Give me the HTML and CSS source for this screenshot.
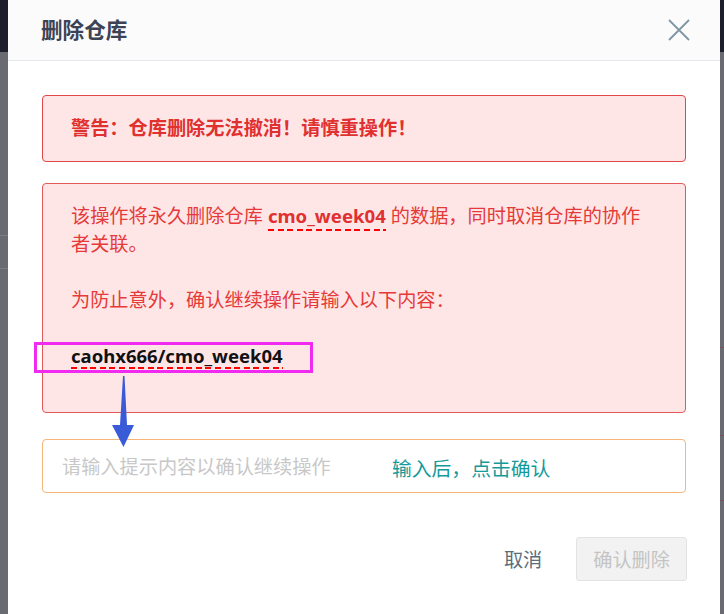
FILE: index.html
```html
<!DOCTYPE html>
<html lang="zh-CN">
<head>
<meta charset="utf-8">
<title>删除仓库</title>
<link rel="stylesheet" href="styles.css">
</head>
<body>
<div class="dialog">
  <header class="dlg-head">
    <h2 class="dlg-title">删除仓库</h2>
    <button class="dlg-close" aria-label="关闭">
      <svg width="22" height="22" viewBox="0 0 22 22"><path d="M1 1 L21 21 M21 1 L1 21" stroke="#7f95a2" stroke-width="1.8" fill="none"/></svg>
    </button>
  </header>
  <div class="dlg-body">
    <div class="alert alert-warn">警告：仓库删除无法撤消！请慎重操作！</div>
    <div class="alert alert-info">
      <p class="para">该操作将永久删除仓库 <b class="mark">cmo_week04</b> 的数据，同时取消仓库的协作者关联。</p>
      <p class="para">为防止意外，确认继续操作请输入以下内容：</p>
      <p class="para repo"><b class="mark mark-dark">caohx666/cmo_week04</b></p>
    </div>
    <div class="field">
      <input class="field-input" type="text" placeholder="请输入提示内容以确认继续操作">
      <span class="note">输入后，点击确认</span>
    </div>
  </div>
  <footer class="dlg-foot">
    <button class="btn-cancel">取消</button>
    <button class="btn-confirm" disabled>确认删除</button>
  </footer>
  <span class="hl-box"></span>
  <svg class="arrow" width="24" height="72" viewBox="0 0 24 72"><polygon points="11,0 12.5,0 15,49 22,49 11.5,71 0,49 8,49" fill="#3a5bd8"/></svg>
</div>
</body>
</html>
```
FILE: styles.css
```css
html, body {
  margin: 0;
  padding: 0;
}
body {
  width: 724px;
  height: 614px;
  overflow: hidden;
  font-family: "Noto Sans", "Noto Sans CJK SC", sans-serif;
  background:
    linear-gradient(#1c1f2b, #1c1f2b) 0 0 / 100% 52px no-repeat,
    linear-gradient(#7b7c84, #7b7c84) 0 235px / 8px 1px no-repeat,
    linear-gradient(#7b7c84, #7b7c84) 0 268px / 8px 1px no-repeat,
    linear-gradient(#7a5158, #7a5158) 720px 347px / 4px 1px no-repeat,
    linear-gradient(#7a5158, #7a5158) 720px 435px / 4px 1px no-repeat,
    linear-gradient(#7a5158, #7a5158) 720px 500px / 4px 1px no-repeat,
    #696a72;
}
.dialog {
  position: relative;
  margin-left: 8px;
  width: 712px;
  height: 614px;
  background: #fff;
  display: flex;
  flex-direction: column;
}
.dlg-head {
  height: 60px;
  border-bottom: 1px solid #e4e7ec;
  background: #fbfbfc;
  display: flex;
  align-items: center;
  justify-content: space-between;
  padding: 0 30px 0 33px;
}
.dlg-title {
  margin: 0;
  font-size: 21.6px;
  font-weight: 700;
  color: #3d4354;
  line-height: 28px;
}
.dlg-close {
  border: 0;
  background: none;
  padding: 0;
  width: 22px;
  height: 22px;
  display: block;
}
.dlg-close svg { display: block; }
.dlg-body {
  padding: 34px 34px 0;
  display: flex;
  flex-direction: column;
}
.alert {
  background: #ffe6e6;
  border: 1px solid #e0474b;
  border-radius: 4px;
  color: #e53a39;
  font-size: 19.2px;
  line-height: 28px;
}
.alert-warn {
  padding: 18px 28px 19px;
  font-size: 19.2px;
  font-weight: 700;
  color: #e0302f;
  margin-bottom: 21px;
}
.alert-info {
  padding: 18px 30px 42px 28px;
  border-color: #e2595c;
}
.para {
  margin: 0 0 28px;
}
.para.repo { margin: 0; }
.mark {
  font-weight: 700;
  font-size: 18.6px;
  color: #e03030;
  padding-bottom: 3px;
  background: repeating-linear-gradient(to right, #f00 0 6px, transparent 6px 9.6px) left bottom / 100% 2px no-repeat;
}
.mark-dark {
  color: #111;
  font-size: 18.5px;
  padding-bottom: 1px;
}
.field {
  position: relative;
  margin-top: 26px;
}
.field-input {
  box-sizing: border-box;
  width: 100%;
  height: 54px;
  border: 1px solid #f6b679;
  border-radius: 4px;
  padding: 0 19px;
  font-family: inherit;
  font-size: 19.2px;
  outline: none;
  background: #fff;
}
.field-input::placeholder {
  color: #c8c8c8;
}
.note {
  position: absolute;
  left: 350px;
  top: 16px;
  font-size: 19.8px;
  line-height: 28px;
  color: #149a9a;
}
.dlg-foot {
  display: flex;
  justify-content: flex-end;
  align-items: center;
  gap: 17px;
  padding: 44px 33px 0 34px;
}
.btn-cancel {
  border: 0;
  background: none;
  font-family: inherit;
  font-size: 19.2px;
  color: #5a6e7b;
  padding: 0 17px;
  height: 44px;
}
.btn-confirm {
  box-sizing: border-box;
  height: 44px;
  padding: 0 16px;
  border: 1px solid #e3e3e3;
  border-radius: 3px;
  background: #f2f2f2;
  color: #c4c4c4;
  font-family: inherit;
  font-size: 19.2px;
}
.hl-box {
  position: absolute;
  left: 26px;
  top: 342px;
  width: 273px;
  height: 25px;
  border: 3px solid #f02af0;
}
.arrow {
  position: absolute;
  left: 104px;
  top: 376px;
}
```
